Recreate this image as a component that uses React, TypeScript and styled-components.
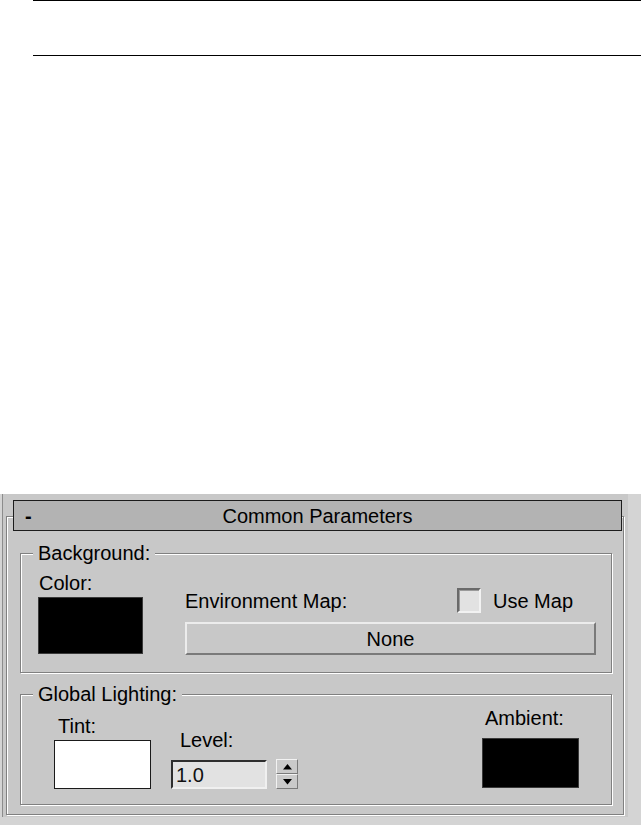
import styled, { createGlobalStyle } from "styled-components";

const GlobalStyle = createGlobalStyle`
  body {
    margin: 0;
    background: #ffffff;
    font-family: "Liberation Sans", Arial, sans-serif;
  }
`;

const Page = styled.div`
  width: 641px;
  height: 825px;
  overflow: hidden;
`;

const TopRule = styled.div`
  margin-left: 33px;
  height: 54px;
  border-top: 1px solid #000;
  border-bottom: 1px solid #000;
`;

const PanelArea = styled.div`
  margin-top: 438px;
  height: 331px;
  background: #d4d4d4;
  padding-left: 2px;
`;

const Sheet = styled.div`
  width: 626px;
  height: 323px;
  background: #c8c8c8;
  border-left: 1px solid #8c8c8c;
  padding: 22px 0 0 3px;
  box-sizing: border-box;
  font-size: 20px;
  line-height: 22px;
  color: #000;
`;

const Rollout = styled.div`
  width: 618px;
  height: 299px;
  box-sizing: border-box;
  border: 1px solid #808080;
  box-shadow: inset 1px 1px 0 #fff, 1px 1px 0 #fff;
  padding: 0 0 0 13px;
`;

const TitleBar = styled.div`
  display: grid;
  grid-template-columns: 1fr auto 1fr;
  align-items: center;
  width: 609px;
  height: 31px;
  box-sizing: border-box;
  margin: -17px 0 0 -7px;
  background: #b3b3b3;
  border: 1px solid #1c1c1c;
  padding: 0 11px;
`;

const Minus = styled.span`
  justify-self: start;
  font-weight: bold;
`;

const Group = styled.div<{ $gap: number }>`
  position: relative;
  width: 592px;
  box-sizing: border-box;
  margin-top: ${(p) => p.$gap}px;
  border: 1px solid #808080;
  box-shadow: inset 1px 1px 0 #fff, 1px 1px 0 #fff;
  display: flex;
  align-items: flex-end;
`;

const Legend = styled.span`
  position: absolute;
  top: -12px;
  left: 12px;
  padding: 0 5px;
  background: #c8c8c8;
`;

const BackgroundBody = styled.div`
  display: flex;
  align-items: flex-end;
  gap: 42px;
  padding: 18px 0 17px 17px;
`;

const Column = styled.div<{ $drop?: number }>`
  display: flex;
  flex-direction: column;
  margin-bottom: ${(p) => p.$drop ?? 0}px;
`;

const Label = styled.span<{ $indent?: number }>`
  margin-left: ${(p) => p.$indent ?? 0}px;
  white-space: nowrap;
`;

const Swatch = styled.div<{ $w: number; $h: number; $color: string; $top: number }>`
  width: ${(p) => p.$w}px;
  height: ${(p) => p.$h}px;
  box-sizing: border-box;
  margin-top: ${(p) => p.$top}px;
  background: ${(p) => p.$color};
  border: 1px solid ${(p) => (p.$color === "#000" ? "#3a3a3a" : "#1a1a1a")};
`;

const MapColumn = styled.div`
  display: flex;
  flex-direction: column;
  width: 411px;
`;

const MapRow = styled.div`
  display: flex;
  align-items: center;
  height: 25px;
`;

const MapLabel = styled.span`
  flex: 1;
`;

const CheckWrap = styled.label`
  display: flex;
  align-items: center;
  width: 139px;
  gap: 12px;
`;

const CheckBox = styled.span`
  width: 24px;
  height: 25px;
  box-sizing: border-box;
  background: #e2e2e2;
  border-style: solid;
  border-width: 2px;
  border-color: #6a6a6a #f2f2f2 #f2f2f2 #6a6a6a;
  box-shadow: inset 1px 1px 0 #9a9a9a;
`;

const MapButton = styled.div`
  margin-top: 9px;
  height: 33px;
  box-sizing: border-box;
  display: flex;
  align-items: center;
  justify-content: center;
  background: #c8c8c8;
  border-style: solid;
  border-width: 2px;
  border-color: #ececec #7a7a7a #7a7a7a #ececec;
`;

const LightingBody = styled.div`
  flex: 1;
  display: flex;
  align-items: flex-end;
  padding: 12px 32px 15px 33px;
`;

const LevelColumn = styled.div`
  display: flex;
  flex-direction: column;
  margin-left: 20px;
`;

const LevelRow = styled.div`
  display: flex;
  align-items: flex-end;
  gap: 9px;
  margin-top: 8px;
`;

const LevelInput = styled.div`
  width: 96px;
  height: 29px;
  box-sizing: border-box;
  background: #e2e2e2;
  border-style: solid;
  border-width: 2px;
  border-color: #2e2e2e #f0f0f0 #f0f0f0 #2e2e2e;
  padding-left: 3px;
  display: flex;
  align-items: center;
  color: #111;
`;

const Spinner = styled.div`
  width: 22px;
  height: 30px;
  display: flex;
  flex-direction: column;
`;

const SpinButton = styled.div`
  flex: 1;
  box-sizing: border-box;
  display: flex;
  align-items: center;
  justify-content: center;
  background: #cacaca;
  border-style: solid;
  border-width: 1px;
  border-color: #f2f2f2 #7a7a7a #7a7a7a #f2f2f2;
`;

const AmbientColumn = styled(Column)`
  margin-left: auto;
`;

const Arrow = ({ down }: { down?: boolean }) => (
  <svg width="9" height="6" viewBox="0 0 9 6">
    <polygon points={down ? "0,0 9,0 4.5,5.5" : "4.5,0 9,5.5 0,5.5"} fill="#000" />
  </svg>
);

export default function App() {
  return (
    <Page>
      <GlobalStyle />
      <TopRule />
      <PanelArea>
        <Sheet>
          <Rollout>
            <TitleBar>
              <Minus>-</Minus>
              <span>Common Parameters</span>
              <span />
            </TitleBar>

            <Group $gap={22}>
              <Legend>Background:</Legend>
              <BackgroundBody>
                <Column $drop={1}>
                  <Label $indent={1}>Color:</Label>
                  <Swatch $w={105} $h={57} $color="#000" $top={3} />
                </Column>
                <MapColumn>
                  <MapRow>
                    <MapLabel>Environment Map:</MapLabel>
                    <CheckWrap>
                      <CheckBox />
                      <span>Use Map</span>
                    </CheckWrap>
                  </MapRow>
                  <MapButton>None</MapButton>
                </MapColumn>
              </BackgroundBody>
            </Group>

            <Group $gap={21}>
              <Legend>Global Lighting:</Legend>
              <LightingBody>
                <Column>
                  <Label $indent={4}>Tint:</Label>
                  <Swatch $w={97} $h={49} $color="#fff" $top={3} />
                </Column>
                <LevelColumn>
                  <Label $indent={9}>Level:</Label>
                  <LevelRow>
                    <LevelInput>1.0</LevelInput>
                    <Spinner>
                      <SpinButton>
                        <Arrow />
                      </SpinButton>
                      <SpinButton>
                        <Arrow down />
                      </SpinButton>
                    </Spinner>
                  </LevelRow>
                </LevelColumn>
                <AmbientColumn $drop={1}>
                  <Label $indent={3}>Ambient:</Label>
                  <Swatch $w={97} $h={50} $color="#000" $top={9} />
                </AmbientColumn>
              </LightingBody>
            </Group>
          </Rollout>
        </Sheet>
      </PanelArea>
    </Page>
  );
}
